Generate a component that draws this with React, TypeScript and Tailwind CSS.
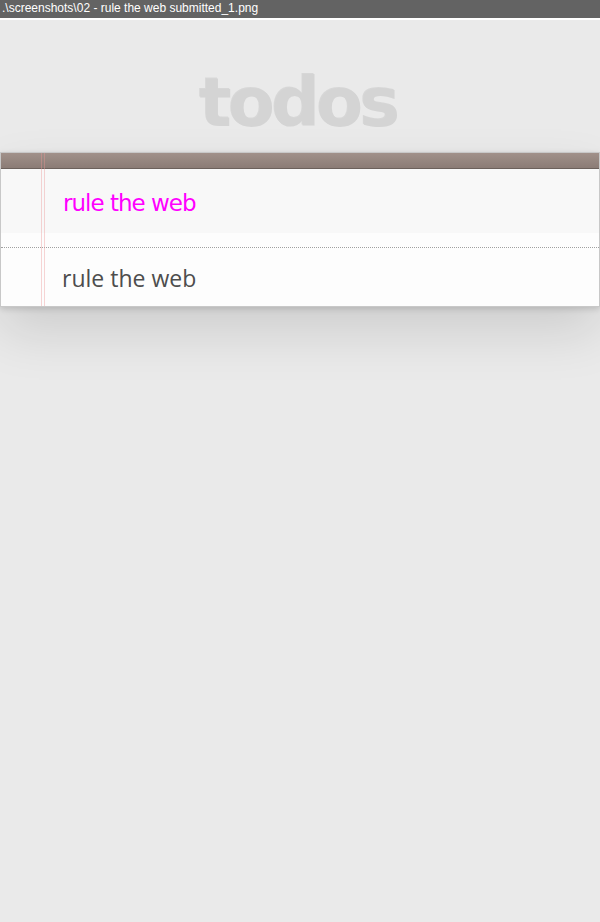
import React from "react";

export default function App() {
  return (
    <div className="min-h-[922px] bg-[#eaeaea]">
      <div className="h-[18px] bg-[#636363] text-white text-[12px] leading-[16px] pl-[2px] font-['Liberation_Sans',Arial,sans-serif]">
        .\screenshots\02 - rule the web submitted_1.png
      </div>
      <div className="h-[2px] bg-white" />
      <div className="h-[132px] pt-[48px] text-center">
        <h1 className="text-[68px] leading-[70px] font-bold tracking-[-3.5px] text-[#d4d4d4] font-['DejaVu_Sans',sans-serif] [text-shadow:-1px_-1px_0_rgba(0,0,0,0.08)] pr-[4px]">
          todos
        </h1>
      </div>
      <div className="relative bg-white border border-[#c8c8c8] shadow-[0_2px_6px_0_rgba(0,0,0,0.15),0_25px_50px_0_rgba(0,0,0,0.12)]">
        <div className="h-[16px] bg-gradient-to-b from-[#a1918a] to-[#8b7c76] border-b border-[#6c615c]" />
        <div className="h-[64px] bg-[#f8f8f8] pl-[62px] pt-[4px] flex items-center">
          <span className="text-[23px] text-[#ff00ff] font-['DejaVu_Sans',sans-serif] tracking-[-1px] leading-none">
            rule the web
          </span>
        </div>
        <div className="h-[14px] bg-[#fdfdfd]" />
        <div className="border-t border-dotted border-[#a0a0a0]" />
        <div className="h-[58px] bg-[#fdfdfd] pl-[61px] pt-[3px] flex items-center">
          <span className="text-[23px] text-[#4d4d4d] font-['Open_Sans',sans-serif] leading-none">
            rule the web
          </span>
        </div>
        <div className="absolute top-0 bottom-0 left-[40px] w-[4px] border-x border-[rgba(235,150,150,0.4)]" />
      </div>
    </div>
  );
}
